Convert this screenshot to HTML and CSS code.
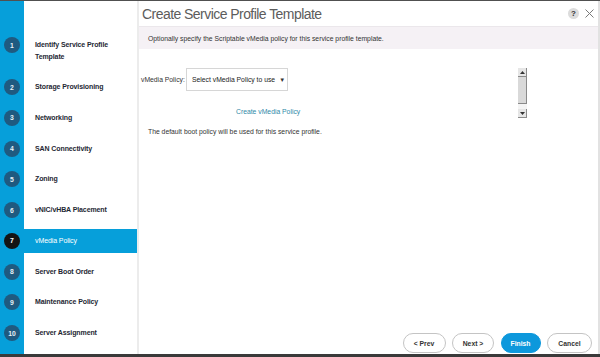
FILE: index.html
```html
<!DOCTYPE html>
<html>
<head>
<meta charset="utf-8">
<link rel="stylesheet" href="styles.css">
</head>
<body>
<div class="frame">
  <aside class="sidebar">
    <ol class="steps">
      <li class="step step-multi"><span class="num">1</span><span class="label">Identify Service Profile<br>Template</span></li>
      <li class="step"><span class="num">2</span><span class="label">Storage Provisioning</span></li>
      <li class="step"><span class="num">3</span><span class="label">Networking</span></li>
      <li class="step"><span class="num">4</span><span class="label">SAN Connectivity</span></li>
      <li class="step"><span class="num">5</span><span class="label">Zoning</span></li>
      <li class="step"><span class="num">6</span><span class="label">vNIC/vHBA Placement</span></li>
      <li class="step active"><span class="num">7</span><span class="label">vMedia Policy</span></li>
      <li class="step"><span class="num">8</span><span class="label">Server Boot Order</span></li>
      <li class="step"><span class="num">9</span><span class="label">Maintenance Policy</span></li>
      <li class="step"><span class="num">10</span><span class="label">Server Assignment</span></li>
    </ol>
  </aside>
  <main class="main">
    <header class="header">
      <h1 class="title">Create Service Profile Template</h1>
      <div class="tools">
        <span class="help">?</span>
        <svg class="close" width="9" height="9" viewBox="0 0 9 9"><path d="M0.5 0.5L8.5 8.5M8.5 0.5L0.5 8.5" stroke="#7a7a7a" stroke-width="1" fill="none"/></svg>
      </div>
    </header>
    <div class="band">Optionally specify the Scriptable vMedia policy for this service profile template.</div>
    <section class="content">
      <div class="form">
        <div class="row">
          <span class="field-label">vMedia Policy:</span>
          <div class="select">Select vMedia Policy to use <span class="caret">▼</span></div>
        </div>
        <a class="link">Create vMedia Policy</a>
        <p class="note">The default boot policy will be used for this service profile.</p>
      </div>
      <div class="scrollbar">
        <div class="sb-btn"><svg width="5" height="3" viewBox="0 0 5 3"><path d="M0 3L2.5 0L5 3Z" fill="#333"/></svg></div>
        <div class="sb-thumb"></div>
        <div class="sb-gap"></div>
        <div class="sb-btn"><svg width="5" height="3" viewBox="0 0 5 3"><path d="M0 0L2.5 3L5 0Z" fill="#333"/></svg></div>
      </div>
    </section>
    <footer class="footer">
      <button class="btn btn-prev">&lt; Prev</button>
      <button class="btn btn-next">Next &gt;</button>
      <button class="btn btn-finish">Finish</button>
      <button class="btn btn-cancel">Cancel</button>
    </footer>
  </main>
</div>
</body>
</html>
```

FILE: styles.css
```css
* { box-sizing: border-box; }
html, body {
  margin: 0;
  padding: 0;
  width: 600px;
  height: 357px;
  overflow: hidden;
  background: #ffffff;
  font-family: "Liberation Sans", Arial, sans-serif;
}
.frame {
  display: flex;
  width: 600px;
  height: 357px;
  border-top: 1px solid #505050;
  border-bottom: 3px solid #3a3a3a;
}
.sidebar {
  width: 139px;
  flex: none;
  background: linear-gradient(to right, #069fda 0, #069fda 24px, #ffffff 24px);
  border-right: 2px solid #ececec;
}
.steps {
  list-style: none;
  margin: 0;
  padding: 38px 0 0 0;
  display: flex;
  flex-direction: column;
  gap: 6.75px;
}
.step {
  display: flex;
  align-items: center;
  height: 24px;
  width: 137px;
}
.step-multi {
  align-items: flex-start;
  margin-bottom: 5.25px;
}
.num {
  flex: none;
  width: 16px;
  height: 16px;
  margin: 0 15px 0 4px;
  border-radius: 50%;
  background: #1f5a80;
  color: #e8f1f6;
  font-size: 6.8px;
  font-weight: bold;
  display: flex;
  align-items: center;
  justify-content: center;
}
.step-multi .num { margin-top: -2px; }
.label {
  font-size: 7px;
  font-weight: bold;
  letter-spacing: -0.1px;
  color: #1e2733;
  line-height: 12px;
}
.active { background: #069fda; }
.active .num { background: #141414; color: #fff; }
.active .label { color: #ffffff; font-weight: normal; }

.main {
  flex: 1;
  display: flex;
  flex-direction: column;
  border-right: 2px solid #e2e2e2;
}
.header {
  height: 25px;
  display: flex;
  align-items: center;
  justify-content: space-between;
  padding: 0 4px 0 3px;
}
.title {
  margin: 0;
  font-size: 14px;
  font-weight: normal;
  color: #5c5c5c;
  letter-spacing: -0.55px;
}
.tools {
  display: flex;
  align-items: center;
  gap: 6px;
}
.help {
  width: 11px;
  height: 11px;
  border-radius: 50%;
  background: #dcdcdc;
  color: #333;
  font-size: 8px;
  font-weight: bold;
  display: flex;
  align-items: center;
  justify-content: center;
}
.close { display: block; }
.band {
  height: 23px;
  background: #f5f1f5;
  border-top: 1px solid #ebe7eb;
  display: flex;
  align-items: center;
  padding-left: 9px;
  font-size: 6.8px;
  color: #333;
}
.content {
  flex: 1;
  display: flex;
  padding: 19px 0 0 2px;
}
.form {
  width: 377px;
  display: flex;
  flex-direction: column;
  align-items: flex-start;
}
.row {
  display: flex;
  align-items: center;
  height: 23px;
}
.field-label {
  font-size: 6.8px;
  color: #333;
  width: 45px;
}
.select {
  width: 102px;
  height: 23px;
  border: 1px solid #d6d6d6;
  display: flex;
  align-items: center;
  padding-left: 5px;
  font-size: 6.8px;
  color: #222;
}
.caret {
  font-size: 6px;
  margin-left: 4px;
  color: #333;
}
.link {
  margin: 16px 0 0 95px;
  font-size: 6.8px;
  line-height: 10px;
  color: #2f8aa8;
}
.note {
  margin: 10px 0 0 7px;
  font-size: 6.8px;
  line-height: 10px;
  color: #333;
}
.scrollbar {
  width: 9px;
  display: flex;
  flex-direction: column;
}
.sb-btn {
  width: 9px;
  height: 9px;
  background: #e6e6e6;
  border-right: 1px solid #8a8a8a;
  border-bottom: 1px solid #8a8a8a;
  display: flex;
  align-items: center;
  justify-content: center;
}
.sb-thumb {
  height: 27px;
  background: #d9d9d9;
  border-right: 1px solid #8a8a8a;
  border-bottom: 1px solid #8a8a8a;
}
.sb-gap {
  height: 5px;
  background: #f4f4f4;
}
.footer {
  display: flex;
  justify-content: flex-end;
  gap: 6.5px;
  padding: 0 6px 1px 0;
}
.btn {
  height: 20px;
  border: 1px solid #c4c4c4;
  border-radius: 10px;
  background: #ffffff;
  font-family: "Liberation Sans", Arial, sans-serif;
  font-size: 6.8px;
  font-weight: bold;
  color: #333;
  padding: 0;
}
.btn-prev { width: 43px; }
.btn-next { width: 42px; }
.btn-finish { width: 40px; background: #0d98dc; border-color: #0d98dc; color: #fff; }
.btn-cancel { width: 45px; }
```
